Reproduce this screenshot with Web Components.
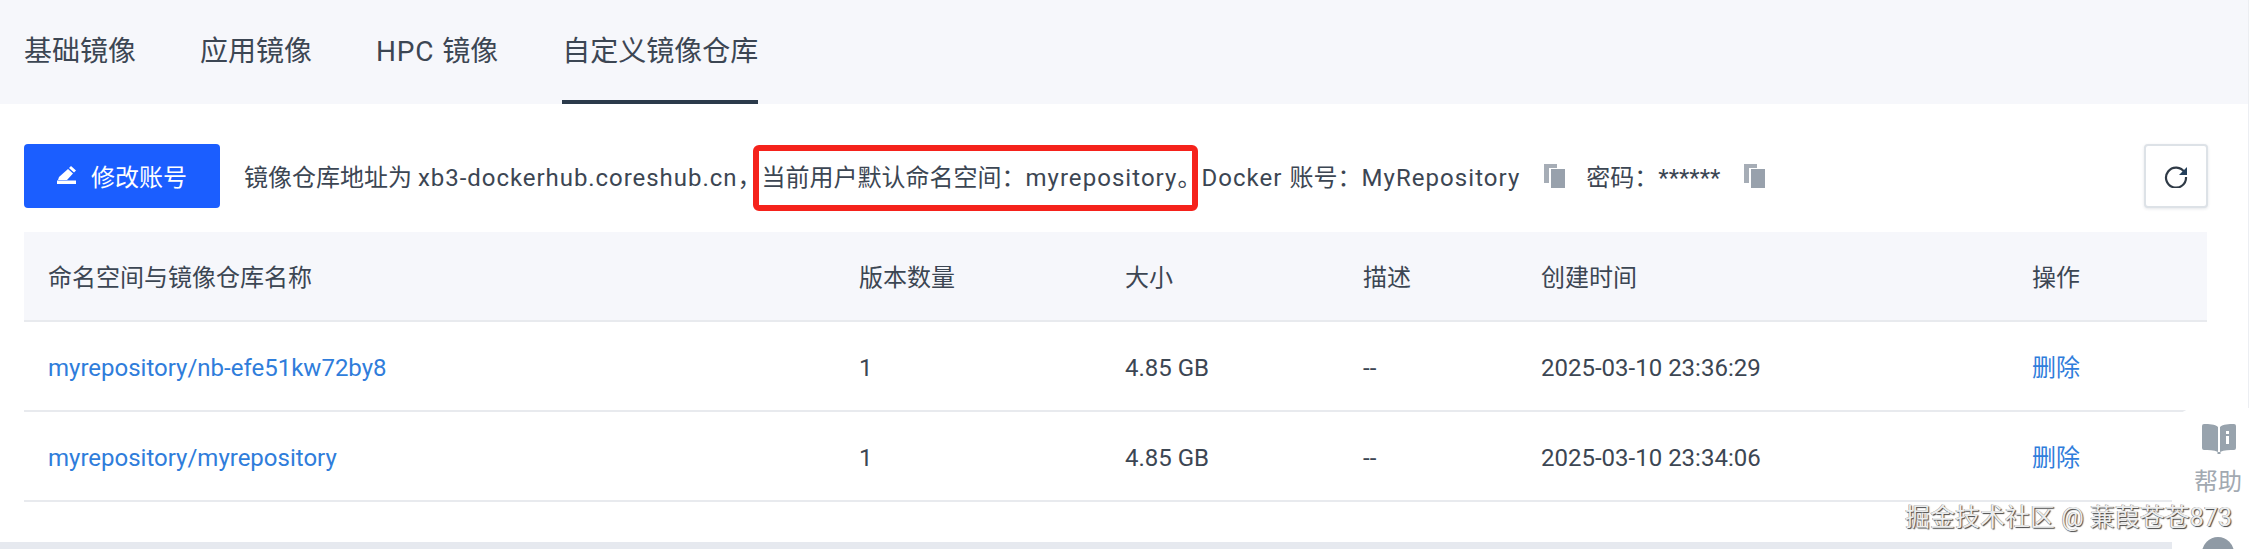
<!DOCTYPE html>
<html lang="zh-CN"><head><meta charset="utf-8"><title>自定义镜像仓库</title>
<style>
html,body{margin:0;padding:0;background:#fff;}
body{width:2249px;height:549px;overflow:hidden;font-family:Roboto,"Noto Sans CJK SC",sans-serif;font-size:24px;color:#3c4653;position:relative;}
tab-item wide-text{letter-spacing:.85px}
info-line wide-text.addr{letter-spacing:.95px}
</style></head><body>
<image-page>
  <tab-bar>
    <tab-item>基础镜像</tab-item><tab-item>应用镜像</tab-item><tab-item><wide-text>HPC </wide-text>镜像</tab-item><tab-item active>自定义镜像仓库</tab-item>
  </tab-bar>
  <tool-bar>
    <edit-button>修改账号</edit-button>
    <info-line>镜像仓库地址为 <wide-text class="addr">xb3-dockerhub.coreshub.cn</wide-text>，</info-line>
    <mark-box>当前用户默认命名空间：<wide-text>myrepository</wide-text>。</mark-box>
    <info-line><wide-text>Docker </wide-text>账号：<wide-text>MyRepository</wide-text></info-line>
    <copy-icon></copy-icon>
    <info-line>密码：******</info-line>
    <copy-icon></copy-icon>
    <refresh-button></refresh-button>
  </tool-bar>
  <repo-table>
    <repo-row head><table-cell>命名空间与镜像仓库名称</table-cell><table-cell>版本数量</table-cell><table-cell>大小</table-cell><table-cell>描述</table-cell><table-cell>创建时间</table-cell><table-cell>操作</table-cell></repo-row>
    <repo-row><table-cell latin link>myrepository/nb-efe51kw72by8</table-cell><table-cell latin>1</table-cell><table-cell latin>4.85 GB</table-cell><table-cell latin>--</table-cell><table-cell latin>2025-03-10 23:36:29</table-cell><table-cell link>删除</table-cell></repo-row>
    <repo-row><table-cell latin link>myrepository/myrepository</table-cell><table-cell latin>1</table-cell><table-cell latin>4.85 GB</table-cell><table-cell latin>--</table-cell><table-cell latin>2025-03-10 23:34:06</table-cell><table-cell link>删除</table-cell></repo-row>
  </repo-table>
</image-page>
<help-dock>帮助</help-dock>
<water-mark>掘金技术社区 @ 蒹葭苍苍873</water-mark>
<script>
function def(name,css,html){
  customElements.define(name,class extends HTMLElement{
    constructor(){super();const s=this.attachShadow({mode:'open'});s.innerHTML='<style>'+css+'</style>'+html;}
  });
}
def('wide-text',':host{display:inline;letter-spacing:1.05px}','<slot></slot>');
def('image-page',':host{display:flex;flex-direction:column;height:549px;background:#e6e9ef;border-right:1px solid #eceef2;box-sizing:border-box}.w{flex:1;background:#fff;display:flex;flex-direction:column}.g{height:7px;flex:none}','<div class="w"><slot></slot></div><div class="g"></div>');
def('tab-bar',':host{display:flex;gap:64px;height:104px;padding-left:24px;background:#f6f7fb;flex:none;box-sizing:border-box}','<slot></slot>');
def('tab-item',':host{display:flex;align-items:center;height:104px;box-sizing:border-box;padding-bottom:6px;font-size:28px;color:#3c4653;white-space:pre}:host([active]){border-bottom:4px solid #2b3a4b;padding-bottom:2px}','<span><slot></slot></span>');
def('tool-bar',':host{display:flex;align-items:center;height:64px;margin:40px 40px 24px 24px;flex:none;white-space:pre}','<slot></slot>');
def('edit-button',':host{display:flex;align-items:center;justify-content:center;gap:15px;width:196px;height:64px;background:#1b5eff;border-radius:4px;color:#fff;flex:none;margin-right:24px;padding-bottom:2px;box-sizing:border-box}svg{width:19px;height:18px;display:block}','<svg viewBox="0 0 19 18"><path fill="#fff" d="M14 0l5 4.5-2 2L12 2zM11 3l5 4.5L10 14H1l1-3z"/><path fill="#fff" d="M0 14.5h19V18H0z"/></svg><slot></slot>');
def('info-line',':host{display:block;flex:none;padding-bottom:2px}','<slot></slot>');
def('mark-box',':host{display:flex;align-items:center;align-self:stretch;flex:none;position:relative;padding-bottom:2px;box-sizing:border-box}.r{position:absolute;left:-8px;right:3px;top:1px;bottom:-3px;border:6px solid #f5221b;border-radius:6px;pointer-events:none}','<span><slot></slot></span><div class="r"></div>');
def('copy-icon',':host{display:block;flex:none;width:22px;height:24px;margin:0 20px 0 24px}svg{display:block;width:22px;height:24px}','<svg viewBox="0 0 22 24"><path fill="#a6adb6" d="M0 0h13v4H5v15H0z"/><path fill="#98a1ac" d="M7 5h14v19H7z"/></svg>');
def('refresh-button',':host{display:flex;align-items:center;justify-content:center;width:64px;height:64px;box-sizing:border-box;border:2px solid #dde2e7;border-radius:4px;background:#fff;box-shadow:0 1px 3px rgba(40,60,80,.12);margin-left:auto;flex:none}svg{width:24px;height:24px;display:block}','<svg viewBox="0 0 24 24"><path fill="none" stroke="#2f3a46" stroke-width="2.2" d="M20.6 8.5A10 10 0 1 0 22 13"/><path fill="#24405c" d="M23 3v8h-8z"/></svg>');
def('repo-table',':host{display:block;margin:0 41px 0 24px}','<slot></slot>');
def('repo-row',':host{display:grid;grid-template-columns:811px 266px 238px 178px 491px 176px;align-items:center;height:90px;box-sizing:border-box;padding-left:24px;border-bottom:2px solid #e8eaee;white-space:pre}:host([head]){background:#f6f7fb}','<slot></slot>');
def('table-cell',':host{display:block;padding-bottom:2px}:host([latin]){padding:3px 0 0}:host([link]){color:#2f7ddb}','<slot></slot>');
def('help-dock',':host{position:absolute;left:2172px;top:408px;width:77px;height:141px;background:#fff;border-top-left-radius:24px;display:block;color:#a2a9b1;text-align:center;overflow:hidden}svg{position:absolute;left:30px;top:16px;width:34px;height:30px}span{position:absolute;left:22px;top:58px;line-height:32px;white-space:nowrap}i{position:absolute;left:30px;top:129px;width:32px;height:32px;border-radius:50%;background:#8f9aa5}','<svg viewBox="0 0 34 30"><path fill="#98a3ad" d="M2 0c5 0 11 0 14 3v25C12 26 6 26 2 26a2 2 0 0 1-2-2V2a2 2 0 0 1 2-2zM32 0a2 2 0 0 1 2 2v22a2 2 0 0 1-2 2c-4 0-10 0-14 2V3c3-3 9-3 14-3z"/><path fill="#fff" d="M24 7h3v3h-3zM24 12h3v8h-3z"/><path fill="#98a3ad" d="M15.5 28h3v2h-3z"/></svg><span><slot></slot></span><i></i>');
def('water-mark',':host{position:absolute;left:1905px;top:500px;font-size:25px;line-height:36px;color:#eceded;white-space:pre;text-shadow:1px 1px 1px #444,-.5px -.5px .5px #888}','<slot></slot>');
</script>
</body></html>
